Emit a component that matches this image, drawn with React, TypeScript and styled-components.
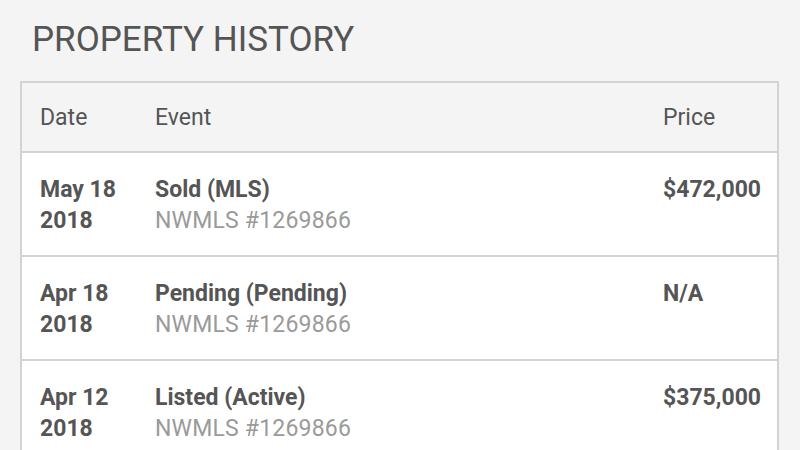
import React from 'react';
import styled, {createGlobalStyle} from 'styled-components';

const GlobalStyle = createGlobalStyle`
  body {
    margin: 0;
    background: #f4f4f4;
    font-family: Roboto, 'Noto Sans', sans-serif;
    color: #555555;
  }
`;

const Page = styled.div`
  width: 800px;
  height: 450px;
  overflow: hidden;
  padding: 22px 21px 0 20px;
  box-sizing: border-box;
`;

const Title = styled.h1`
  margin: 0 0 24px 12px;
  font-size: 35px;
  line-height: 1;
  font-weight: 400;
  color: #555555;
`;

const Table = styled.div`
  border: 2px solid #d3d3d3;
  border-bottom: none;
  background: #ffffff;
`;

const Row = styled.div<{$header?: boolean}>`
  display: grid;
  grid-template-columns: 115px 1fr 114px;
  padding-left: 18px;
  align-items: ${(p) => (p.$header ? 'center' : 'start')};
  height: ${(p) => (p.$header ? '68px' : 'auto')};
  padding-top: ${(p) => (p.$header ? '0' : '21px')};
  padding-bottom: ${(p) => (p.$header ? '0' : '19px')};
  background: ${(p) => (p.$header ? '#f4f4f4' : '#ffffff')};
  border-bottom: 2px solid #d3d3d3;
`;

const HeadCell = styled.div`
  font-size: 23px;
  color: #555555;
  padding-top: 1px;
`;

const Cell = styled.div`
  font-size: 23px;
  line-height: 31px;
`;

const Strong = styled.div`
  font-weight: 700;
  color: #555555;
`;

const Sub = styled.div`
  color: #9a9a9a;
  letter-spacing: 0.2px;
`;

interface IEvent {
  day: string;
  year: string;
  event: string;
  source: string;
  price: string;
}

const events: IEvent[] = [
  {day: 'May 18', year: '2018', event: 'Sold (MLS)', source: 'NWMLS #1269866', price: '$472,000'},
  {day: 'Apr 18', year: '2018', event: 'Pending (Pending)', source: 'NWMLS #1269866', price: 'N/A'},
  {day: 'Apr 12', year: '2018', event: 'Listed (Active)', source: 'NWMLS #1269866', price: '$375,000'},
];

function App() {
  return (
    <Page>
      <GlobalStyle />
      <Title>PROPERTY HISTORY</Title>
      <Table>
        <Row $header>
          <HeadCell>Date</HeadCell>
          <HeadCell>Event</HeadCell>
          <HeadCell>Price</HeadCell>
        </Row>
        {events.map((e) => (
          <Row key={e.day}>
            <Cell>
              <Strong>{e.day}</Strong>
              <Strong>{e.year}</Strong>
            </Cell>
            <Cell>
              <Strong>{e.event}</Strong>
              <Sub>{e.source}</Sub>
            </Cell>
            <Cell>
              <Strong>{e.price}</Strong>
            </Cell>
          </Row>
        ))}
      </Table>
    </Page>
  );
}

export default App;
